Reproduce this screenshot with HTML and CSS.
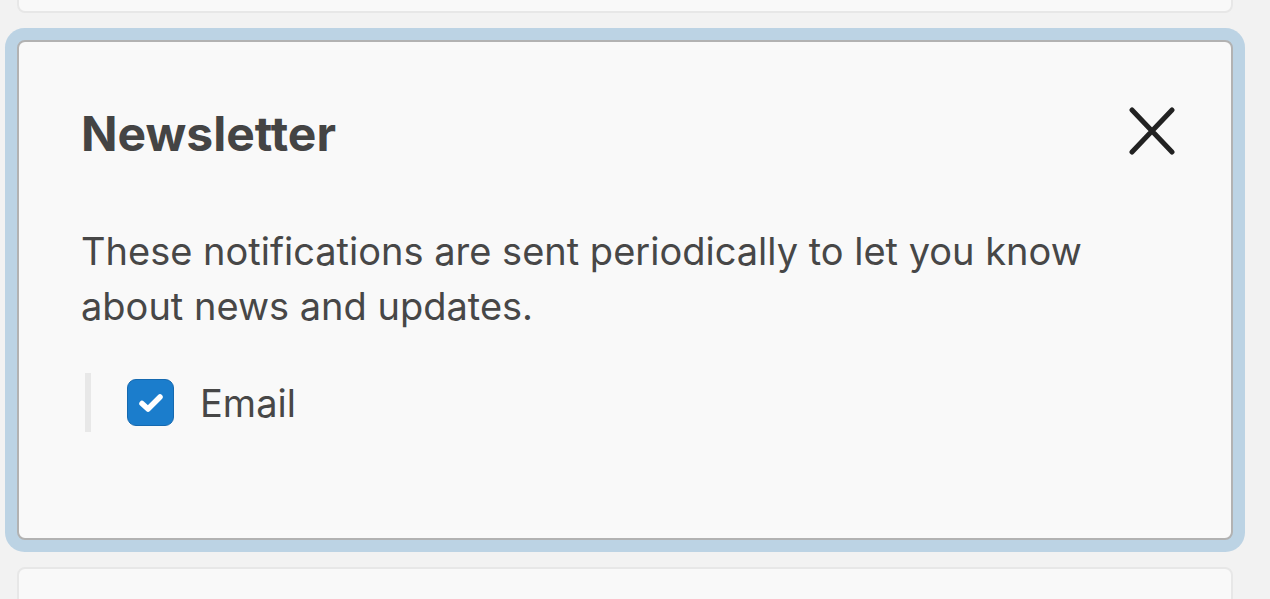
FILE: index.html
```html
<!DOCTYPE html>
<html lang="en">
<head>
  <meta charset="UTF-8" />
  <title>Notifications</title>
  <link rel="stylesheet" href="styles.css">
</head>
<body>
  <div class="list">
    <div class="card card-prev"></div>

    <div class="card card-open">
      <div class="card-head">
        <h2>Newsletter</h2>
        <button class="close-btn" aria-label="Close">
          <svg width="46" height="48" viewBox="0 0 46 48">
            <path d="M3 3 L43 45 M43 3 L3 45" stroke="#222" stroke-width="5" stroke-linecap="round" fill="none"/>
          </svg>
        </button>
      </div>
      <p class="desc">These notifications are sent periodically to let you know about news and updates.</p>
      <div class="options">
        <label class="option">
          <span class="check">
            <svg width="26" height="22" viewBox="0 0 26 22">
              <path d="M4 11.5 L10 17 L22 5" stroke="#fff" stroke-width="5.5" stroke-linecap="round" stroke-linejoin="round" fill="none"/>
            </svg>
          </span>
          Email
        </label>
      </div>
    </div>

    <div class="card card-next"></div>
  </div>
</body>
</html>
```

FILE: styles.css
```css
html, body {
  margin: 0;
  height: 100%;
  background: #f2f2f2;
  font-family: Inter, 'Noto Sans', sans-serif;
  color: #474747;
  overflow: hidden;
}

.list {
  width: 1216px;
  padding-left: 17px;
  display: flex;
  flex-direction: column;
  gap: 27px;
}

.card {
  box-sizing: border-box;
  background: #f9f9f9;
  border: 2px solid #e7e7e7;
  border-radius: 8px;
}

.card-prev {
  height: 53px;
  margin-top: -40px;
}

.card-next {
  height: 80px;
}

.card-open {
  height: 500px;
  border-color: #b2b2b2;
  box-shadow: 0 0 0 12px #bcd3e4;
  padding: 62px 56px 0 62px;
}

.card-head {
  display: flex;
  justify-content: space-between;
  align-items: flex-start;
}

.card-head h2 {
  margin: 0;
  font-size: 48px;
  font-weight: 700;
  line-height: 60px;
  color: #444;
}

.close-btn {
  background: none;
  border: none;
  padding: 0;
  margin-top: 3px;
  cursor: pointer;
}

.desc {
  margin: 60px 0 0;
  font-size: 38px;
  line-height: 55px;
  max-width: 1040px;
}

.options {
  margin-top: 39px;
  margin-left: 4px;
  border-left: 6px solid #e8e8e8;
  padding: 6px 0 6px 36px;
}

.option {
  display: flex;
  align-items: center;
  gap: 26px;
  font-size: 38px;
  cursor: pointer;
}

.check {
  width: 47px;
  height: 47px;
  box-sizing: border-box;
  border-radius: 9px;
  background: #1b7dcc;
  border: 1px solid #1569b0;
  display: flex;
  align-items: center;
  justify-content: center;
}
```
